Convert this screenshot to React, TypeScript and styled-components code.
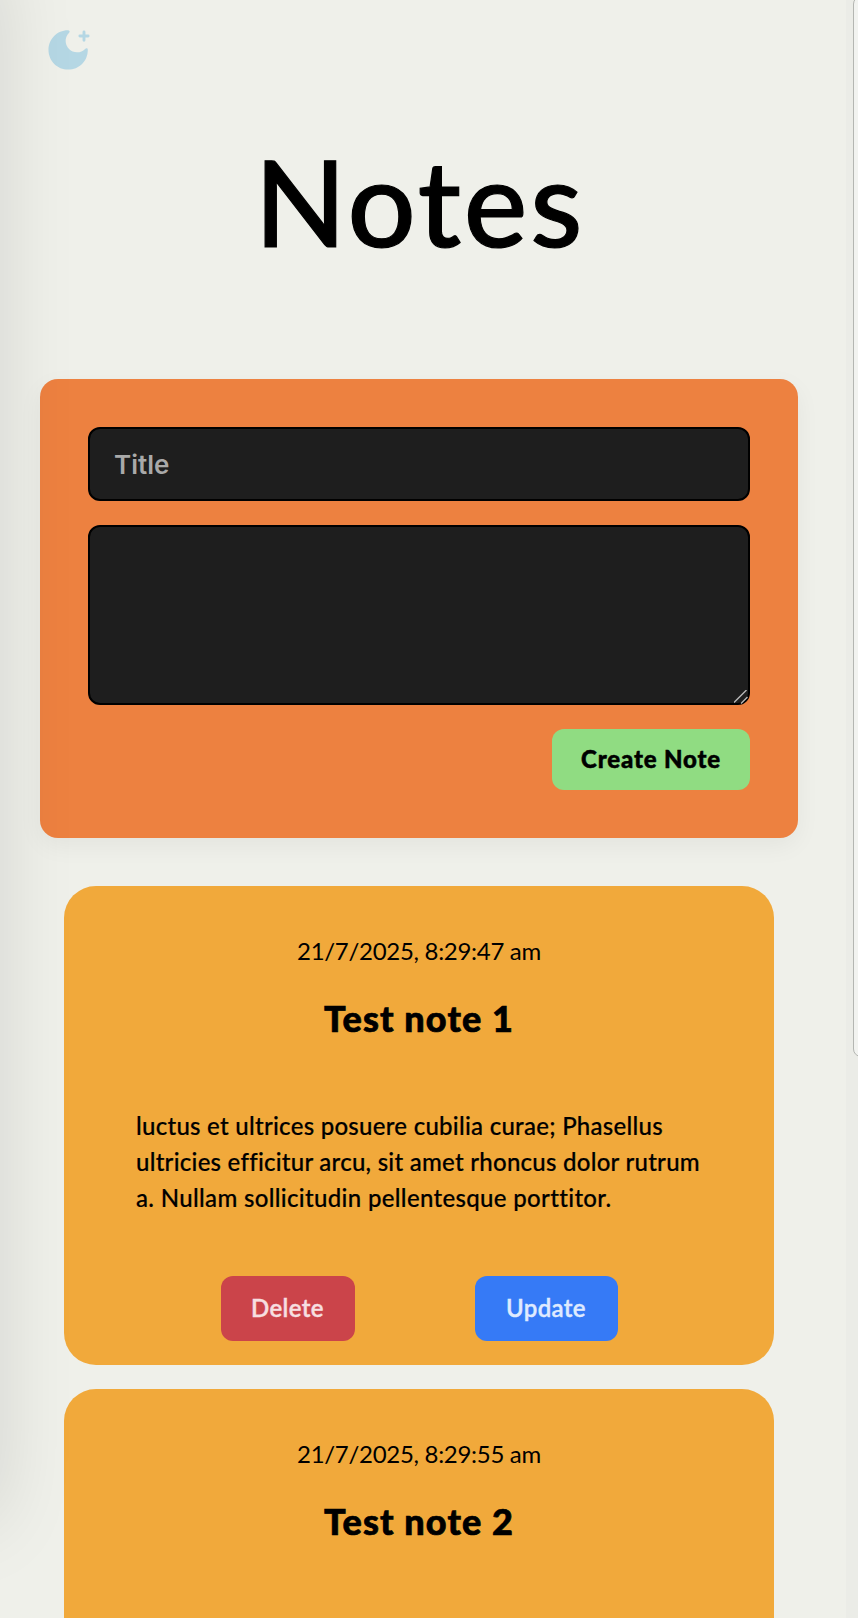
import React from "react";
import styled, { createGlobalStyle } from "styled-components";

const GlobalStyle = createGlobalStyle`
  *, *::before, *::after { box-sizing: border-box; }
  html, body { margin: 0; padding: 0; overflow: hidden; }
  body {
    background: #eff0ea;
    color: #000;
    font-family: Lato, "Open Sans", sans-serif;
  }
`;

const Page = styled.div`
  position: relative;
  height: 1618px;
  overflow: hidden;
  background: #eff0ea;
`;

const LeftShade = styled.div`
  position: absolute;
  top: -40px;
  left: -60px;
  width: 50px;
  height: 1560px;
  border-radius: 24px;
  box-shadow: 0 0 80px 4px rgba(0, 0, 0, 0.15);
  pointer-events: none;
`;

const ScrollGutter = styled.div`
  position: absolute;
  top: 0;
  right: 0;
  width: 12px;
  height: 100%;
  background: #ebece7;
`;

const ScrollThumb = styled.div`
  width: 24px;
  height: 1061px;
  margin: -4px 0 0 7px;
  border: 1px solid #b4b6b2;
  border-radius: 8px;
  background: #f2f3f0;
`;

const Header = styled.header`
  height: 100px;
  padding: 28px 0 0 46px;
`;

const ThemeToggle = styled.button`
  display: block;
  width: 48px;
  height: 48px;
  padding: 0;
  border: 0;
  background: none;
  color: #b5d7e4;
`;

const Main = styled.main`
  width: 758px;
  margin-left: 40px;
`;

const PageTitle = styled.h1`
  height: 279px;
  margin: 0;
  padding: 29px 0 0 2px;
  font-size: 120px;
  line-height: 144px;
  font-weight: 500;
  letter-spacing: 3px;
  text-align: center;
  -webkit-text-stroke: 1.2px currentColor;
`;

const NoteForm = styled.form`
  display: flex;
  flex-direction: column;
  gap: 24px;
  height: 459px;
  padding: 48px;
  border-radius: 18px;
  background: #ed8140;
  box-shadow: 0 8px 24px rgba(0, 0, 0, 0.05);
`;

const TitleInput = styled.input`
  height: 74px;
  padding: 0 24px;
  border: 2px solid #000;
  border-radius: 12px;
  outline: 0;
  background: #1e1e1e;
  color: #fff;
  font: 600 26px/32px Inter, sans-serif;

  &::placeholder { color: #a9a9a9; opacity: 1; }
`;

const BodyField = styled.div`
  position: relative;
  height: 180px;
`;

const BodyInput = styled.textarea`
  display: block;
  width: 100%;
  height: 100%;
  padding: 24px;
  border: 2px solid #000;
  border-radius: 12px;
  outline: 0;
  resize: none;
  background: #1e1e1e;
  color: #fff;
  font: 500 24px/32px Inter, sans-serif;
`;

const ResizeGrip = styled.svg`
  position: absolute;
  right: 2px;
  bottom: 1px;
`;

const CreateButton = styled.button`
  align-self: flex-end;
  width: 198px;
  height: 61px;
  padding: 0 0 1px;
  border: 0;
  border-radius: 12px;
  background: #90dc82;
  color: #000;
  font: 900 24px/30px Lato, sans-serif;
  letter-spacing: 0.85px;
  -webkit-text-stroke: 0.5px currentColor;
`;

const NoteList = styled.section`
  display: flex;
  flex-direction: column;
  gap: 24px;
  padding: 48px 24px 0;
`;

const NoteCard = styled.article`
  height: 479px;
  padding: 47px 72px 24px;
  border-radius: 32px;
  background: #f1a93b;
`;

const NoteDate = styled.time`
  display: block;
  height: 36px;
  font-size: 24px;
  line-height: 36px;
  letter-spacing: -0.3px;
  text-align: center;
`;

const NoteTitle = styled.h2`
  height: 54px;
  margin: 22px 0 0;
  font-size: 36px;
  line-height: 54px;
  font-weight: 900;
  letter-spacing: 1.1px;
  text-align: center;
  -webkit-text-stroke: 0.7px currentColor;
`;

const NoteBody = styled.p`
  height: 108px;
  margin: 63px 0 0;
  font-size: 24px;
  line-height: 36px;
  font-weight: 500;
  -webkit-text-stroke: 0.2px currentColor;
`;

const Line = styled.span<{ $tracking: number }>`
  display: block;
  white-space: nowrap;
  letter-spacing: ${(p) => p.$tracking}px;
`;

const Actions = styled.div`
  display: flex;
  justify-content: center;
  gap: 120px;
  margin-top: 60px;
`;

const ActionButton = styled.button<{ $color: string; $text: string; $width: number }>`
  width: ${(p) => p.$width}px;
  height: 65px;
  padding: 0 0 2px;
  border: 0;
  border-radius: 12px;
  background: ${(p) => p.$color};
  color: ${(p) => p.$text};
  font: 600 24px/30px Lato, sans-serif;
  letter-spacing: 0.35px;
  -webkit-text-stroke: 0.4px currentColor;
`;

const notes = [
  {
    date: "21/7/2025, 8:29:47 am",
    title: "Test note 1",
    lines: [
      { text: "luctus et ultrices posuere cubilia curae; Phasellus", tracking: 0.27 },
      { text: "ultricies efficitur arcu, sit amet rhoncus dolor rutrum", tracking: 0.26 },
      { text: "a. Nullam sollicitudin pellentesque porttitor.", tracking: 0.33 },
    ],
  },
  { date: "21/7/2025, 8:29:55 am", title: "Test note 2", lines: [] },
];

function MoonIcon() {
  return (
    <svg width="48" height="48" viewBox="0 0 48 48" fill="currentColor">
      <path d="M21.8 2.2C11.2 2.2 2.5 11 2.5 21.9c0 10.9 8.8 19.7 19.7 19.7 10.9 0 19.7-8.5 19.6-19.9 0-1.7-1.8-1.9-2.7-.8A11.2 11.2 0 1 1 22.9 5C24.400 3.800 23.700 2.200 21.800 2.200Z" />
      <path d="M38 4v8.200M33.900 8h8.200" stroke="currentColor" strokeWidth="2.900" strokeLinecap="round" />
    </svg>
  );
}

export default function App() {
  return (
    <Page>
      <GlobalStyle />
      <Header>
        <ThemeToggle aria-label="Toggle theme">
          <MoonIcon />
        </ThemeToggle>
      </Header>
      <Main>
        <PageTitle>Notes</PageTitle>
        <NoteForm>
          <TitleInput placeholder="Title" />
          <BodyField>
            <BodyInput />
            <ResizeGrip width="14" height="14" viewBox="0 0 14 14" stroke="#b8b8b8" strokeWidth="1.4">
              <path d="M0 12.500 12.500 0M7 13.500 13.500 7" />
            </ResizeGrip>
          </BodyField>
          <CreateButton type="button">Create Note</CreateButton>
        </NoteForm>
        <NoteList>
          {notes.map((note) => (
            <NoteCard key={note.title}>
              <NoteDate>{note.date}</NoteDate>
              <NoteTitle>{note.title}</NoteTitle>
              <NoteBody>
                {note.lines.map((line) => (
                  <Line key={line.text} $tracking={line.tracking}>
                    {line.text}
                  </Line>
                ))}
              </NoteBody>
              {note.lines.length > 0 && (
                <Actions>
                  <ActionButton $color="#cb444a" $text="#f7dfe0" $width={134}>Delete</ActionButton>
                  <ActionButton $color="#367af6" $text="#dfeaff" $width={143}>Update</ActionButton>
                </Actions>
              )}
            </NoteCard>
          ))}
        </NoteList>
      </Main>
      <ScrollGutter>
        <ScrollThumb />
      </ScrollGutter>
      <LeftShade />
    </Page>
  );
}
